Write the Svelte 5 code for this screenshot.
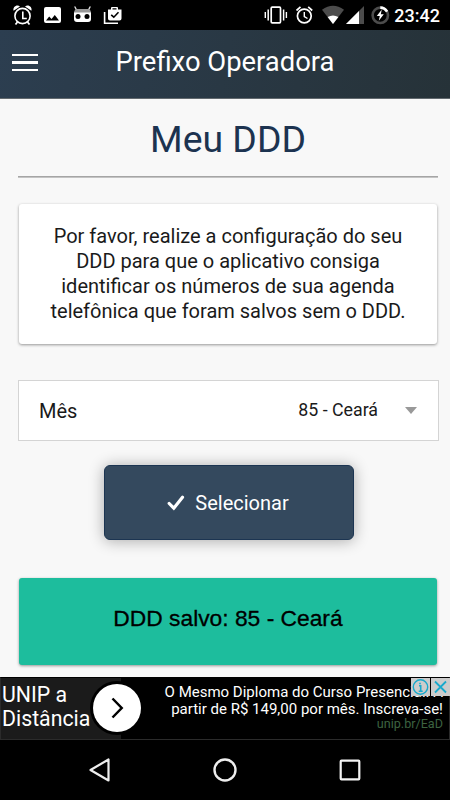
<script>
  const ddds = [
    { code: 85, state: "Ceará" },
  ];

  let selected = $state(ddds[0]);
  let saved = $state(ddds[0]);

  const label = (ddd) => `${ddd.code} - ${ddd.state}`;

  const save = () => {
    saved = selected;
  };
</script>

<div class="screen">
  <div class="status-bar">
    <svg class="left-icons" width="130" height="30" viewBox="0 0 130 30">
      <!-- alarm clock -->
      <g fill="none" stroke="#fff" stroke-width="1.6">
        <circle cx="22.5" cy="16" r="7.6" />
        <path d="M22.8 11.5v7h4" />
        <path d="M17.5 22l-2 2.5M27.5 22l2 2.5" stroke-width="1.8" />
      </g>
      <path
        d="M13.6 10.8c-1.2-3.5 3-6.8 6.4-4.4zM31.4 10.8c1.2-3.5-3-6.8-6.4-4.4z"
        fill="#fff" />
      <!-- picture -->
      <path
        d="M46 7h13q2 0 2 2v12q0 2-2 2H46q-2 0-2-2V9q0-2 2-2zM46 20.5h13l-4.2-5.5-3.3 4-2.3-2.6z"
        fill="#fff"
        fill-rule="evenodd" />
      <!-- robot head -->
      <path
        d="M75 7l1.5 3M90 7l-1.5 3"
        stroke="#ddd"
        stroke-width="1.4"
        stroke-linecap="round" />
      <path d="M74 13q0-3.500 3-4h11q3 .5 3 4z" fill="#999" />
      <path d="M74 12.500h17v6.500q0 3-3 3H77q-3 0-3-3z" fill="#fff" />
      <circle cx="78" cy="16.500" r="2.500" fill="#000" />
      <circle cx="87" cy="16.500" r="2.500" fill="#000" />
      <!-- bag with check -->
      <path d="M104.600 12v11.200H118" fill="none" stroke="#fff" stroke-width="1.600" />
      <path
        d="M108 9.500h3V8q0-1 1-1h5q1 0 1 1v1.500h3.500v9q0 2-2 2H110q-2 0-2-2zM112.500 8.300v1.200h4V8.300z"
        fill="#fff"
        fill-rule="evenodd" />
      <path d="M111.200 14.800l2.600 2.400 4.700-4.900" fill="none" stroke="#000" stroke-width="1.600" />
    </svg>
    <div class="right-icons">
      <svg width="128" height="30" viewBox="262 0 128 30">
        <!-- vibrate -->
        <g fill="none" stroke="#fff">
          <rect x="271.200" y="7.200" width="9.300" height="15.600" rx="1" stroke-width="1.700" />
          <path d="M268.200 9.500v11M283.600 9.500v11" stroke-width="1.500" />
          <path d="M265.300 12v6M286.400 12v6" stroke-width="1.400" />
        </g>
        <!-- alarm -->
        <g fill="none" stroke="#fff" stroke-width="1.700">
          <circle cx="304.300" cy="16" r="6.900" />
          <path d="M304.300 12v4.500l3.200 2" stroke-width="1.400" />
          <path d="M296.500 10.500l4-3.600M312.200 10.500l-4-3.600" />
        </g>
        <!-- wifi -->
        <path d="M322 9.800q11-8 22 0L333 24z" fill="#4c4c4c" />
        <path d="M327.600 17q5.400-3.200 10.800 0L333 24z" fill="#fff" />
        <!-- signal -->
        <path d="M364 6v18h-18z" fill="#4c4c4c" />
        <path d="M359 11v13h-13z" fill="#fff" />
        <!-- battery -->
        <circle cx="380.300" cy="15.300" r="7.700" fill="none" stroke="#4c4c4c" stroke-width="2.600" />
        <path d="M380.300 7.600a7.700 7.700 0 0 1 6.800 4.100" fill="none" stroke="#fff" stroke-width="2.600" />
        <path d="M381.800 9.500l-5 6.500h3l-1 4.800 5-6.500h-3z" fill="#fff" />
      </svg>
      <span class="time">23:42</span>
    </div>
  </div>

  <header>
    <button class="menu" aria-label="Menu">
      <span></span>
      <span></span>
      <span></span>
    </button>
    <h1>Prefixo Operadora</h1>
  </header>

  <main>
    <h2>Meu DDD</h2>
    <hr />

    <div class="card">
      <p>
        Por favor, realize a configuração do seu<br />
        DDD para que o aplicativo consiga<br />
        identificar os números de sua agenda<br />
        telefônica que foram salvos sem o DDD.
      </p>
    </div>

    <div class="select">
      <span class="select-label">Mês</span>
      <span class="select-value">{label(selected)}</span>
      <span class="caret"></span>
    </div>

    <button class="submit" onclick={save}>
      <svg width="18" height="16" viewBox="0 0 18 16">
        <path
          d="M2.200 8.500l4.600 4.700L15.500 2.200"
          fill="none"
          stroke="#fff"
          stroke-width="3.200"
          stroke-linecap="round" />
      </svg>
      Selecionar
    </button>

    <div class="saved">DDD salvo: {label(saved)}</div>
  </main>

  <div class="ad">
    <div class="ad-title">UNIP a<br />Distância</div>
    <div class="ad-go">
      <svg width="48" height="48" viewBox="0 0 48 48">
        <path d="M19.500 14.500l9.200 9.500-9.200 9.500" fill="none" stroke="#000" stroke-width="2.500" />
      </svg>
    </div>
    <div class="ad-text">
      <p>O Mesmo Diploma do Curso Presencial. A<br />partir de R$ 149,00 por mês. Inscreva-se!</p>
      <span class="ad-link">unip.br/EaD</span>
    </div>
    <div class="ad-choices">
      <svg width="19" height="18" viewBox="0 0 19 18">
        <circle cx="9.500" cy="9" r="7.200" fill="none" stroke="#18a9cc" stroke-width="1.400" />
        <path d="M8 7.700h1.700V13M7.700 13.200h4M9 4.700v1.600" fill="none" stroke="#18a9cc" stroke-width="1.600" />
      </svg>
      <svg width="19" height="18" viewBox="0 0 19 18">
        <path d="M4 3.500l11 11M15 3.500l-11 11" stroke="#18a9cc" stroke-width="1.800" />
      </svg>
    </div>
  </div>

  <nav>
    <svg width="24" height="26" viewBox="0 0 24 26">
      <path d="M20.500 2.500v21L2.500 13z" fill="none" stroke="#eee" stroke-width="2.200" stroke-linejoin="round" />
    </svg>
    <svg width="26" height="26" viewBox="0 0 26 26">
      <circle cx="13" cy="13" r="10.500" fill="none" stroke="#eee" stroke-width="2.400" />
    </svg>
    <svg width="24" height="24" viewBox="0 0 24 24">
      <rect x="2.700" y="2.700" width="18.600" height="18.600" rx=".8" fill="none" stroke="#f4f4f4" stroke-width="2.200" />
    </svg>
  </nav>
</div>

<style>
  :global(body) {
    margin: 0;
  }

  .screen {
    display: flex;
    flex-direction: column;
    width: 450px;
    height: 800px;
    overflow: hidden;
    background: #f8f8f8;
    font-family: Roboto, "Liberation Sans", sans-serif;
    color: #1a1a1a;
  }

  svg {
    display: block;
    flex: none;
  }

  h1,
  h2,
  p {
    margin: 0;
    font-weight: 400;
  }

  button {
    padding: 0;
    border: 0;
    font-family: inherit;
    cursor: pointer;
  }

  .status-bar {
    display: flex;
    justify-content: space-between;
    flex: none;
    height: 30px;
    background: #000;
  }

  .right-icons {
    display: flex;
    padding-right: 10px;
  }

  .time {
    width: 50px;
    text-align: right;
    font-size: 18px;
    font-weight: 500;
    line-height: 32px;
    color: #fff;
  }

  header {
    display: grid;
    grid-template-columns: 50px 1fr 50px;
    align-items: center;
    flex: none;
    box-sizing: border-box;
    height: 69px;
    border-bottom: 1px solid #62696e;
    background: linear-gradient(100deg, #2c3e50, #263238);
  }

  .menu {
    display: flex;
    flex-direction: column;
    gap: 5px;
    width: 26px;
    margin: -3px 0 0 12px;
    background: none;
  }

  .menu span {
    height: 2.6px;
    background: #fff;
  }

  h1 {
    padding-bottom: 4px;
    font-size: 27.4px;
    line-height: 32px;
    text-align: center;
    color: #fff;
  }

  main {
    display: flex;
    flex-direction: column;
    align-items: center;
    flex: none;
    box-sizing: border-box;
    height: 578px;
    padding: 18px 12px 0 18px;
  }

  h2 {
    font-size: 37.4px;
    line-height: 44px;
    color: #1c3350;
  }

  hr {
    align-self: stretch;
    box-sizing: border-box;
    width: 420px;
    height: 2px;
    margin: 15px 0 26px;
    border: 0;
    border-top: 1px solid #a5a5a5;
    border-bottom: 1px solid #c4c4c4;
  }

  .card,
  .select,
  .saved {
    align-self: stretch;
    box-sizing: border-box;
  }

  .card {
    width: 418px;
    height: 140px;
    margin-left: 1px;
    padding-top: 20px;
    border-radius: 3px;
    background: #fff;
    box-shadow: 0 1px 3px rgba(0, 0, 0, 0.4);
  }

  .card p {
    font-size: 20px;
    line-height: 25px;
    text-align: center;
  }

  .select {
    display: flex;
    align-items: center;
    width: 421px;
    height: 61px;
    margin-top: 36px;
    padding: 0 21px 0 20px;
    border: 1px solid #d4d4d4;
    background: #fff;
  }

  .select-label {
    flex: 1;
    font-size: 20px;
  }

  .select-value {
    padding-bottom: 3px;
    font-size: 17.8px;
  }

  .caret {
    margin-left: 27px;
    border: 6px solid transparent;
    border-top: 7px solid #999;
    border-bottom: 0;
  }

  .submit {
    display: flex;
    align-items: center;
    justify-content: center;
    gap: 10px;
    box-sizing: border-box;
    width: 250px;
    height: 75px;
    margin: 24px 0 38px 1px;
    padding-right: 1px;
    border: 1px solid #1c3552;
    border-radius: 6px;
    background: #34495e;
    box-shadow: 0 1px 15px rgba(0, 0, 0, 0.32);
    font-size: 20px;
    color: #fff;
  }

  .saved {
    width: 418px;
    height: 87px;
    margin-left: 1px;
    border-radius: 3px;
    background: #1dbd9d;
    box-shadow: 0 1px 3px rgba(0, 0, 0, 0.4);
    font-family: "Liberation Sans", Arial, sans-serif;
    font-size: 22.8px;
    line-height: 80px;
    text-align: center;
    color: #000;
    -webkit-text-stroke: 0.3px #000;
  }

  .ad {
    position: relative;
    display: flex;
    flex: none;
    box-sizing: border-box;
    height: 63px;
    border: 1px solid #2b2b2b;
    border-top-color: #000;
    background: #000;
    color: #fff;
  }

  .ad-title {
    box-sizing: border-box;
    width: 120px;
    padding: 5px 0 0 1px;
    background: #1b1b1b;
    font-size: 21.3px;
    line-height: 24px;
  }

  .ad-go {
    margin: 6px 0 0 -28px;
    width: 48px;
    height: 48px;
    border-radius: 50%;
    background: #fff;
    box-shadow: 0 0 0 3px #000;
  }

  .ad-text {
    flex: 1;
    padding: 6px 6px 0 0;
    text-align: right;
    white-space: nowrap;
  }

  .ad-text p {
    font-size: 15px;
    line-height: 16.5px;
  }

  .ad-link {
    display: block;
    font-size: 12.6px;
    line-height: 14px;
    color: #3c6340;
  }

  .ad-choices {
    position: absolute;
    top: 0;
    right: -1px;
    display: flex;
    gap: 1px;
  }

  .ad-choices svg {
    background: #ccc;
  }

  nav {
    display: flex;
    align-items: center;
    justify-content: space-between;
    flex: 1;
    padding: 0 88px;
    background: #000;
  }
</style>
